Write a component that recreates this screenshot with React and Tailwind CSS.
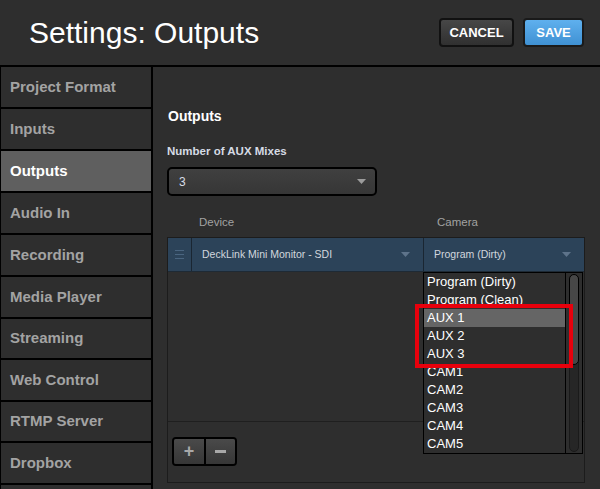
import React from "react";

const navItems = [
  "Project Format",
  "Inputs",
  "Outputs",
  "Audio In",
  "Recording",
  "Media Player",
  "Streaming",
  "Web Control",
  "RTMP Server",
  "Dropbox",
  "",
];

const cameraOptions = [
  "Program (Dirty)",
  "Program (Clean)",
  "AUX 1",
  "AUX 2",
  "AUX 3",
  "CAM1",
  "CAM2",
  "CAM3",
  "CAM4",
  "CAM5",
];

const Caret = ({ className }) => (
  <svg width="9" height="5" viewBox="0 0 9 5" className={className}>
    <path d="M0 0 L9 0 L4.5 5 Z" fill="currentColor" />
  </svg>
);

const App = () => {
  return (
    <div className="w-[600px] h-[489px] bg-[#2e2e2e] overflow-hidden font-['Liberation_Sans',Arial,sans-serif] relative">
      {/* Header */}
      <div className="h-[67px] border-b-2 border-black flex items-center justify-between pl-[29px] pr-[16px]">
        <h1 className="text-[30px] text-white leading-none mt-[1px]">Settings: Outputs</h1>
        <div className="flex gap-[9px]">
          <button className="w-[75px] h-[29px] rounded-[4px] border-2 border-[#111] bg-gradient-to-b from-[#474747] to-[#303030] text-white text-[13px] font-bold">
            CANCEL
          </button>
          <button className="w-[61px] h-[29px] rounded-[4px] border-2 border-[#1a1a1a] bg-gradient-to-b from-[#5fb0ee] to-[#3f91d3] text-white text-[13px] font-bold">
            SAVE
          </button>
        </div>
      </div>

      <div className="flex">
        {/* Sidebar */}
        <div className="w-[153px] shrink-0 border-r-2 border-black border-l border-l-black">
          {navItems.map((item) => (
            <div
              key={item || "blank"}
              className={`border-b-2 border-black flex items-center pl-[9px] text-[15px] font-bold ${
                item === "Streaming" || item === "RTMP Server" ? "h-[41px]" : "h-[42px]"
              } ${item === "Outputs" ? "bg-[#5f5f5f] text-white" : "text-[#a3a3a3]"}`}
            >
              {item}
            </div>
          ))}
        </div>

        {/* Content */}
        <div className="flex-1 pl-[14px] pr-[15px] pt-[40px]">
          <h2 className="text-[14px] font-bold text-white leading-[18px] pl-[1px]">Outputs</h2>
          <div className="mt-[19px] text-[11.5px] font-bold text-[#d6dbe4] leading-[14px]">
            Number of AUX Mixes
          </div>
          <div className="mt-[9px] w-[210px] h-[29px] rounded-[5px] border-2 border-black bg-gradient-to-b from-[#404040] to-[#363636] flex items-center justify-between pl-[10px] pr-[9px]">
            <span className="text-[12px] text-[#d8dce6]">3</span>
            <Caret className="text-[#9c9c9c]" />
          </div>

          {/* Column headers */}
          <div className="mt-[19px] flex text-[11.5px] text-[#a2a2a2] leading-[14px]">
            <span className="pl-[32px] w-[270px]">Device</span>
            <span>Camera</span>
          </div>

          {/* Table */}
          <div className="mt-[8px] w-[418px] h-[246px] border border-[#1c1c1c] relative flex flex-col">
            <div className="h-[34px] bg-[#2c4359] flex border-b border-[#1e2a35]">
              <div className="w-[24px] border-r border-[#1a2632] flex flex-col items-center justify-center gap-[3px]">
                <div className="w-[9px] h-[1px] bg-[#4a6580]" />
                <div className="w-[9px] h-[1px] bg-[#4a6580]" />
                <div className="w-[9px] h-[1px] bg-[#4a6580]" />
              </div>
              <div className="w-[232px] border-r border-[#1a2632] flex items-center justify-between pl-[10px] pr-[13px]">
                <span className="text-[10.5px] text-[#d2d7de]">DeckLink Mini Monitor - SDI</span>
                <Caret className="text-[#5e738a]" />
              </div>
              <div className="flex-1 flex items-center justify-between pl-[10px] pr-[13px]">
                <span className="text-[10.5px] text-[#d2d7de]">Program (Dirty)</span>
                <Caret className="text-[#5e738a]" />
              </div>
            </div>
            <div className="flex-1 border-b border-[#1f1f1f]" />
            <div className="h-[60px] pl-[4px] pt-[15px]">
              <div className="inline-flex h-[29px] rounded-[4px] border-2 border-black overflow-hidden">
                <div className="w-[32px] bg-gradient-to-b from-[#4a4a4a] to-[#363636] flex items-center justify-center text-[#a8a8a8] text-[18px] font-bold border-r-2 border-black">
                  +
                </div>
                <div className="w-[29px] bg-gradient-to-b from-[#4a4a4a] to-[#363636] flex items-center justify-center">
                  <div className="w-[11px] h-[3px] bg-[#a8a8a8]" />
                </div>
              </div>
            </div>

            {/* Dropdown list */}
            <div className="absolute left-[255px] top-[34px] w-[160px] h-[182px] border border-black bg-[#2e2e2e] flex">
              <div className="w-[142px] border-r border-black">
                {cameraOptions.map((opt) => (
                  <div
                    key={opt}
                    className={`h-[18px] pl-[3px] text-[13px] leading-[18px] text-white ${
                      opt === "AUX 1" ? "bg-[#656565]" : ""
                    }`}
                  >
                    {opt}
                  </div>
                ))}
              </div>
              <div className="flex-1 flex justify-center pt-[1px] pb-[1px]">
                <div className="w-[10px] h-full rounded-full bg-[#262626] border border-[#1a1a1a] relative">
                  <div className="absolute left-[-1px] right-[-1px] top-[-1px] h-[91px] rounded-full bg-[#474747] border border-black" />
                </div>
              </div>
            </div>

            {/* Highlight box */}
            <div className="absolute left-[247px] top-[66px] w-[158px] h-[64px] border-4 border-[#e8000c]" />
          </div>
        </div>
      </div>
    </div>
  );
};

export default App;
